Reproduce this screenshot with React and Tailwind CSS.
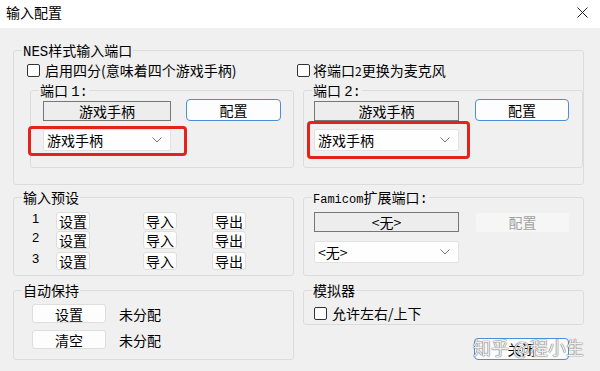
import React from "react";

const cjk = "font-['Noto_Sans_CJK_SC',sans-serif]";
const mono = "font-['Liberation_Mono','Noto_Sans_CJK_SC',monospace]";

function Group({ label, className = "", children }) {
  return (
    <fieldset className={`min-w-0 border border-[#dcdcdc] rounded-[3px] ${className}`}>
      <legend className="ml-[8px] px-px h-[18px] text-[14px] leading-[18px] whitespace-nowrap">{label}</legend>
      {children}
    </fieldset>
  );
}

function Checkbox({ label, gap = "gap-[5px]" }) {
  return (
    <label className={`flex items-center ${gap} h-[18px] text-[14px] leading-[18px]`}>
      <span className="w-[13px] h-[13px] shrink-0 rounded-[2px] border border-[#333] bg-white" />
      {label}
    </label>
  );
}

function SunkenButton({ children, className = "" }) {
  return (
    <div className={`h-[20px] flex items-center justify-center border border-[#767676] bg-[#ededed] text-[14px] leading-[18px] ${className}`}>
      {children}
    </div>
  );
}

function BlueButton({ children, className = "" }) {
  return (
    <button className={`h-[22px] flex items-center justify-center rounded-[4px] border border-[#4a90d9] bg-[#fdfdfd] text-[14px] leading-[18px] ${className}`}>
      {children}
    </button>
  );
}

function Select({ value, className = "" }) {
  return (
    <div className={`h-[22px] flex items-center justify-between pl-[3px] pr-[8px] rounded-[2px] border border-[#e2e2e2] bg-[#fefefe] text-[14px] leading-[18px] ${className}`}>
      <span>{value}</span>
      <svg width="10" height="6" viewBox="0 0 10 6" fill="none" stroke="#777" strokeWidth="1">
        <path d="M0.5 0.5 L5 5 L9.5 0.5" />
      </svg>
    </div>
  );
}

function SmallButton({ children, className = "" }) {
  return (
    <button className={`flex items-center justify-center rounded-[3px] border border-[#dedede] bg-[#fdfdfd] text-[14px] leading-[18px] ${className}`}>
      {children}
    </button>
  );
}

export default function App() {
  return (
    <div className={`relative w-[600px] h-[371px] overflow-hidden bg-[#f0f0f0] text-black leading-[18px] ${cjk}`}>
      {/* Title bar */}
      <div className="h-[28px] bg-white flex items-start justify-between pl-[6px] pr-[12px] pt-[3px]">
        <span className="text-[14px] leading-[18px]">输入配置</span>
        <svg width="11" height="11" viewBox="0 0 11 11" stroke="#222" strokeWidth="1" className="mt-[4px]">
          <path d="M0.5 0.5 L10.5 10.5 M10.5 0.5 L0.5 10.5" />
        </svg>
      </div>

      <div className="pl-[13px] pt-[13px]">
        {/* NES group */}
        <Group label={<span><span className={mono}>NES</span>样式输入端口</span>} className="w-[571px] pb-[16px]">
          <div className="flex items-center h-[20px] mt-[1px] pl-[13px]">
            <div className="w-[270px]">
              <Checkbox label="启用四分(意味着四个游戏手柄)" />
            </div>
            <Checkbox label={<span>将端口<span className="text-[12px]">2</span>更换为麦克风</span>} gap="gap-[3px]" />
          </div>

          <div className="flex gap-[9px] pl-[16px] mt-[1px]">
            <Group label={<span>端口 <span className={mono}>1:</span></span>} className="w-[264px] pb-[16px]">
              <div className="pl-[12px]">
                <div className="flex items-end">
                  <SunkenButton className="w-[128px]">游戏手柄</SunkenButton>
                  <BlueButton className="w-[95px] ml-[15px]">配置</BlueButton>
                </div>
                <div className="relative w-[128px] mt-[8px]">
                  <Select value="游戏手柄" />
                  <div className="absolute -left-[15px] -right-[16px] -top-[3px] -bottom-[5px] rounded-[4px] border-[3px] border-[#e3231c]" />
                </div>
              </div>
            </Group>
            <Group label={<span>端口 <span className={mono}>2:</span></span>} className="w-[280px] pb-[16px]">
              <div className="pl-[10px]">
                <div className="flex items-end">
                  <SunkenButton className="w-[145px]">游戏手柄</SunkenButton>
                  <BlueButton className="w-[94px] ml-[16px]">配置</BlueButton>
                </div>
                <div className="relative w-[145px] mt-[8px]">
                  <Select value="游戏手柄" />
                  <div className="absolute -left-[7px] -right-[11px] -top-[8px] -bottom-[8px] rounded-[4px] border-[3px] border-[#e3231c]" />
                </div>
              </div>
            </Group>
          </div>
        </Group>

        <div className="grid grid-cols-[281px_281px] gap-x-[9px] mt-[3px]">
          {/* Input presets */}
          <Group label="输入预设" className="pb-[4px]">
            <div className="pl-[18px] pt-[6px] flex flex-col">
              {["1", "2", "3"].map((n, i) => (
                <div key={n} className={`flex items-center h-[18px] ${i === 1 ? "mt-[1px]" : i === 2 ? "mt-[3px]" : ""}`}>
                  <span className="w-[24px] text-[13px] leading-[14px] -mt-[4px] font-['Liberation_Sans',sans-serif]">{n}</span>
                  <SmallButton className="w-[34px] h-[18px]">设置</SmallButton>
                  <SmallButton className="w-[34px] h-[18px] ml-[53px]">导入</SmallButton>
                  <SmallButton className="w-[34px] h-[18px] ml-[35px]">导出</SmallButton>
                </div>
              ))}
            </div>
          </Group>

          {/* Famicom port */}
          <Group label={<span><span className={`${mono} text-[12px]`}>Famicom</span>扩展端口<span className={mono}>:</span></span>} className="pb-[12px]">
            <div className="pl-[10px] pt-[6px]">
              <div className="flex items-center">
                <SunkenButton className="w-[145px]">&lt;无&gt;</SunkenButton>
                <div className="w-[93px] h-[19px] ml-[17px] flex items-center justify-center rounded-[2px] bg-[#f6f6f6] text-[14px] text-[#a3a3a3]">
                  配置
                </div>
              </div>
              <Select value="<无>" className="w-[145px] mt-[9px] h-[21px]" />
            </div>
          </Group>
        </div>

        <div className="grid grid-cols-[281px_281px] gap-x-[9px] mt-[5px] items-start">
          {/* Auto hold */}
          <Group label="自动保持" className="pb-[10px]">
            <div className="pl-[18px] pt-[5px] flex flex-col gap-[7px]">
              <div className="flex items-center">
                <SmallButton className="w-[74px] h-[19px]">设置</SmallButton>
                <span className="ml-[13px] text-[14px]">未分配</span>
              </div>
              <div className="flex items-center">
                <SmallButton className="w-[74px] h-[19px]">清空</SmallButton>
                <span className="ml-[13px] text-[14px]">未分配</span>
              </div>
            </div>
          </Group>

          <div className="flex flex-col">
            <Group label="模拟器" className="pb-[2px]">
              <div className="pl-[10px] pt-[5px] h-[23px] flex items-center">
                <Checkbox label="允许左右/上下" gap="gap-[5px]" />
              </div>
            </Group>
            <BlueButton className="w-[95px] self-end mr-[15px] mt-[13px]">关闭</BlueButton>
          </div>
        </div>
      </div>

      {/* Watermark */}
      <div className="absolute left-[473px] top-[336px] text-[18px] leading-[22px] text-white/90 [text-shadow:0_0_1px_#555,0_0_1px_#555] pointer-events-none">
        知乎 @程小生
      </div>
    </div>
  );
}
